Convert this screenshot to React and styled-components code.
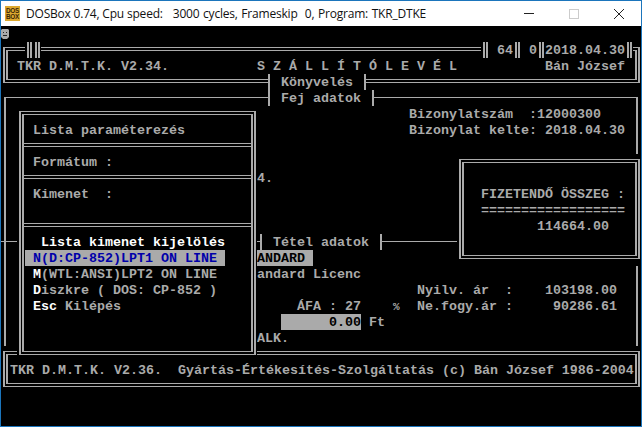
import React from 'react'
import styled, { createGlobalStyle, css } from 'styled-components'

const GRAY = '#aaaaaa'

const GlobalStyle = createGlobalStyle`
html, body {
  margin: 0;
  padding: 0;
  background: #000;
}
`

const Window = styled.div`
width: 642px;
height: 427px;
box-sizing: border-box;
border: 1px solid #1b75bc;
display: flex;
flex-direction: column;
overflow: hidden;
`

const TitleBar = styled.div`
height: 25px;
flex: none;
background: #fff;
display: flex;
align-items: center;
padding-left: 4px;
font-family: "Open Sans", "Liberation Sans", sans-serif;
font-size: 12px;
letter-spacing: -0.2px;
color: #111;
white-space: pre;
`

const TitleText = styled.span`
margin-left: ${p => p.$gap}px;
word-spacing: ${p => p.$word || 0}px;
`

const Controls = styled.div`
margin-left: auto;
display: flex;
height: 100%;
`

const ControlButton = styled.div`
width: 45px;
display: flex;
align-items: center;
justify-content: center;
`

const Screen = styled.div`
display: grid;
grid-template-columns: repeat(80, 8px);
grid-template-rows: repeat(25, 16px);
background: #000;
color: ${GRAY};
font-family: "Liberation Mono", "DejaVu Sans Mono", monospace;
font-size: 13.34px;
font-weight: 700;
line-height: 18px;
white-space: pre;
`

const cell = css`
grid-column: ${p => p.$col + 1} / span ${p => p.$cols || 1};
grid-row: ${p => p.$row + 1} / span ${p => p.$rows || 1};
`

const Text = styled.div`
${cell}
${p => p.$cols && 'background: #000;'}
`

const Filled = styled.div`
${cell}
background: ${GRAY};
color: #000;
text-align: ${p => p.$right ? 'right' : 'left'};
`

const SmileyCell = styled.div`
${cell}
display: flex;
align-items: center;
`

const Percent = styled.div`
${cell}
font-size: 11px;
`

// box drawing characters, drawn in their 8x16 cell
const DoubleBar = styled.div`
${cell}
background: linear-gradient(to right, #000 2px, ${GRAY} 2px 4px, #000 4px 5px, ${GRAY} 5px 7px, #000 7px);
`

const TeeLeft = styled.div`
${cell}
background: linear-gradient(to right, transparent 3px, ${GRAY} 3px 5px, #000 5px);
`

const TeeRight = styled.div`
${cell}
background: linear-gradient(to right, #000 3px, ${GRAY} 3px 5px, transparent 5px);
`

const Rule = styled.div`
${cell}
height: 1px;
margin-top: 7px;
background: ${GRAY};
`

const SingleFrame = styled.div`
${cell}
margin: 7px 3px 0;
border: solid ${GRAY};
border-width: 1px 2px 0;
`

// black slot so a box hides what lies under its whole cell range
const Slot = styled.div`
${cell}
background: ${p => p.$open ? 'transparent' : '#000'};
padding: 5px 1px 7px 2px;
display: flex;
min-height: 0;
`

const Frame = styled.div`
flex: 1;
display: flex;
background: ${p => p.$open ? 'transparent' : '#000'};
border: solid ${GRAY};
border-width: 1px 2px;
padding: 2px 1px;
`

const FrameInner = styled.div`
flex: 1;
display: flex;
flex-direction: column;
border: solid ${GRAY};
border-width: 1px 2px;
padding-left: ${p => p.$indent || 0}px;
padding-top: ${p => p.$top || 0}px;
`

const Section = styled.div`
height: ${p => p.$height}px;
padding: 7px 0 0 1px;
box-sizing: border-box;
flex: ${p => p.$height ? 'none' : 1};
`

const Divider = styled.div`
height: 4px;
flex: none;
box-sizing: border-box;
border: solid ${GRAY};
border-width: 1px 0;
`

const Line = styled.div`
height: 16px;
`

const MenuItem = styled.div`
height: 16px;
width: 200px;
${p => p.$active && css`
  background: ${GRAY};
  color: #0000aa;
`}
`

const Hot = styled.span`
color: #fff;
`

const Heading = styled.div`
height: 16px;
color: #fff;
`

function DosIcon() {
    return (
        <svg width="15" height="15" viewBox="0 0 15 15" style={{ flex: 'none' }}>
            <rect width="15" height="15" fill="#dca92f" />
            <text x="7.5" y="6.6" textAnchor="middle" fontFamily="Liberation Sans" fontWeight="700" fontSize="6.4" fill="#3a2608">DOS</text>
            <text x="7.5" y="13.4" textAnchor="middle" fontFamily="Liberation Sans" fontWeight="700" fontSize="6.4" fill="#3a2608">BOX</text>
        </svg>
    )
}

function SmileyFace() {
    return (
        <svg width="8" height="10" viewBox="0 0 8 10">
            <path d="M1 0H7L8 1V8L6 10H2L0 8V1Z" fill="#aaa" />
            <path d="M2 3h1v1H2zM5 3h1v1H5zM2 6h4v1H2z" fill="#222" />
        </svg>
    )
}

export default function App() {
    return (
        <Window>
            <GlobalStyle />
            <TitleBar>
                <DosIcon />
                <TitleText $gap={6}>DOSBox 0.74, Cpu speed:</TitleText>
                <TitleText $gap={10} $word={0.7}>3000 cycles, Frameskip  0, Program: TKR_DTKE</TitleText>
                <Controls>
                    <ControlButton>
                        <svg width="10" height="10"><path d="M0 4.5H10" stroke="#222" /></svg>
                    </ControlButton>
                    <ControlButton>
                        <svg width="10" height="10"><rect x=".5" y=".5" width="9" height="9" fill="none" stroke="#ccc" /></svg>
                    </ControlButton>
                    <ControlButton>
                        <svg width="10" height="10"><path d="M0 0L10 10M10 0L0 10" stroke="#222" /></svg>
                    </ControlButton>
                </Controls>
            </TitleBar>
            <Screen>
                <SmileyCell $col={0} $row={0}><SmileyFace /></SmileyCell>

                <Slot $col={0} $row={1} $cols={80} $rows={3} $open>
                    <Frame $open><FrameInner /></Frame>
                </Slot>
                <DoubleBar $col={3} $row={1} />
                <DoubleBar $col={4} $row={1} />
                <DoubleBar $col={60} $row={1} />
                <Text $col={61} $row={1} $cols={3}> 64</Text>
                <DoubleBar $col={64} $row={1} />
                <Text $col={65} $row={1} $cols={2}> 0</Text>
                <DoubleBar $col={67} $row={1} />
                <Text $col={68} $row={1} $cols={10}>2018.04.30</Text>
                <DoubleBar $col={78} $row={1} />

                <Text $col={2} $row={2}>TKR D.M.T.K. V2.34.</Text>
                <Text $col={32} $row={2}>S Z Á L L Í T Ó L E V É L</Text>
                <Text $col={68} $row={2}>Bán József</Text>

                <SingleFrame $col={0} $row={4} $cols={80} $rows={16} />

                <TeeLeft $col={33} $row={3} />
                <Text $col={34} $row={3} $cols={11}> Könyvelés </Text>
                <TeeRight $col={45} $row={3} />
                <TeeLeft $col={33} $row={4} />
                <Text $col={34} $row={4} $cols={12}> Fej adatok </Text>
                <TeeRight $col={46} $row={4} />

                <Text $col={51} $row={5}>Bizonylatszám  :12000300</Text>
                <Text $col={51} $row={6}>Bizonylat kelte: 2018.04.30</Text>
                <Text $col={32} $row={9}>4.</Text>

                <Rule $col={0} $row={13} $cols={57} />
                <TeeLeft $col={32} $row={13} />
                <Text $col={33} $row={13} $cols={14}> Tétel adatok </Text>
                <TeeRight $col={47} $row={13} />

                <Filled $col={32} $row={14} $cols={7}>ANDARD</Filled>
                <Text $col={32} $row={15}>andard Licenc</Text>
                <Text $col={52} $row={16}>Nyilv. ár  :</Text>
                <Text $col={68} $row={16}>103198.00</Text>
                <Text $col={37} $row={17}>ÁFA : 27</Text>
                <Percent $col={49} $row={17}>%</Percent>
                <Text $col={52} $row={17}>Ne.fogy.ár :</Text>
                <Text $col={69} $row={17}>90286.61</Text>
                <Filled $col={35} $row={18} $cols={10} $right>0.00</Filled>
                <Text $col={46} $row={18}>Ft</Text>
                <Text $col={32} $row={19}>ALK.</Text>

                <Slot $col={57} $row={8} $cols={23} $rows={7}>
                    <Frame>
                        <FrameInner $indent={17} $top={23}>
                            <Line>FIZETENDŐ ÖSSZEG :</Line>
                            <Line>==================</Line>
                            <Line>       114664.00</Line>
                        </FrameInner>
                    </Frame>
                </Slot>

                <Slot $col={0} $row={20} $cols={80} $rows={3}>
                    <Frame>
                        <FrameInner $indent={2} $top={7}>
                            <Line>TKR D.M.T.K. V2.36.  Gyártás-Értékesítés-Szolgáltatás (c) Bán József 1986-2004</Line>
                        </FrameInner>
                    </Frame>
                </Slot>

                <Slot $col={2} $row={5} $cols={30} $rows={16}>
                    <Frame>
                        <FrameInner>
                            <Section $height={28}><Line>{' Lista paraméterezés'}</Line></Section>
                            <Divider />
                            <Section $height={28}><Line>{' Formátum :'}</Line></Section>
                            <Divider />
                            <Section $height={44}><Line>{' Kimenet  :'}</Line></Section>
                            <Divider />
                            <Section>
                                <Heading>{'  Lista kimenet kijelölés'}</Heading>
                                <MenuItem $active>{' N(D:CP-852)LPT1 ON LINE'}</MenuItem>
                                <MenuItem>{' '}<Hot>M</Hot>(WTL:ANSI)LPT2 ON LINE</MenuItem>
                                <MenuItem>{' '}<Hot>D</Hot>iszkre ( DOS: CP-852 )</MenuItem>
                                <MenuItem>{' '}<Hot>Esc</Hot> Kilépés</MenuItem>
                            </Section>
                        </FrameInner>
                    </Frame>
                </Slot>
            </Screen>
        </Window>
    )
}
